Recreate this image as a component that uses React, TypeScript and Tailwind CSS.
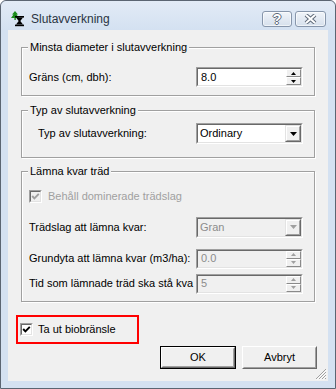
import React from "react";

const Arrow = ({ dir, color, w, h }: { dir: "up" | "down"; color: string; w: number; h: number }) => (
  <svg width={w} height={h} viewBox={`0 0 ${w} ${h}`}>
    {dir === "up" ? (
      <polygon points={`0,${h} ${w / 2},0 ${w},${h}`} fill={color} />
    ) : (
      <polygon points={`0,0 ${w},0 ${w / 2},${h}`} fill={color} />
    )}
  </svg>
);

const Sunken = ({ className, children }: { className: string; children: React.ReactNode }) => (
  <div className={`border border-[#a0a0a0] border-r-white border-b-white ${className}`}>
    <div className="flex h-full border border-[#696969] border-r-[#e3e3e3] border-b-[#e3e3e3]">{children}</div>
  </div>
);

const SpinBox = ({ value, disabled }: { value: string; disabled?: boolean }) => (
  <Sunken className="h-[20px] w-[107px] shrink-0">
    <div
      className={`flex flex-1 items-center pl-[3px] text-[11px] ${
        disabled ? "bg-[#f0f0f0] text-[#8c8c8c]" : "bg-white text-black"
      }`}
    >
      {value}
    </div>
    <div className={`flex w-[15px] flex-col ${disabled ? "bg-[#f0f0f0]" : "bg-white"}`}>
      <div className="flex h-[8px] items-center justify-center border border-white border-r-[#8a8a8a] border-b-[#8a8a8a] bg-[#f0f0f0]">
        <Arrow dir="up" color={disabled ? "#a0a0a0" : "#000"} w={5} h={3} />
      </div>
      <div className="flex h-[8px] items-center justify-center border border-white border-r-[#8a8a8a] border-b-[#8a8a8a] bg-[#f0f0f0]">
        <Arrow dir="down" color={disabled ? "#a0a0a0" : "#000"} w={5} h={3} />
      </div>
    </div>
  </Sunken>
);

const Combo = ({ value, disabled }: { value: string; disabled?: boolean }) => (
  <Sunken className="h-[21px] w-[107px] shrink-0">
    <div
      className={`flex flex-1 items-center pl-[2px] text-[11px] ${
        disabled ? "bg-[#f0f0f0] text-[#8c8c8c]" : "bg-white text-black"
      }`}
    >
      {value}
    </div>
    <div className="border border-[#e3e3e3] border-r-[#696969] border-b-[#696969]">
      <div className="flex h-full w-[14px] items-center justify-center border border-white border-r-[#a0a0a0] border-b-[#a0a0a0] bg-[#f0f0f0]">
        <Arrow dir="down" color={disabled ? "#a0a0a0" : "#000"} w={7} h={4} />
      </div>
    </div>
  </Sunken>
);

const CheckBox = ({ checked, disabled }: { checked: boolean; disabled?: boolean }) => (
  <div className="h-[13px] w-[13px] shrink-0 border border-[#a0a0a0] border-r-white border-b-white">
    <div
      className={`flex h-full items-center justify-center border border-[#696969] border-r-[#e3e3e3] border-b-[#e3e3e3] ${
        disabled ? "bg-[#f0f0f0]" : "bg-white"
      }`}
    >
      {checked && (
        <svg width="9" height="9" viewBox="0 0 9 9">
          <polyline points="1.2,4 3.4,6.4 7.8,1.8" fill="none" stroke={disabled ? "#a0a0a0" : "#000"} strokeWidth="1.9" />
        </svg>
      )}
    </div>
  </div>
);

const Group = ({ title, className, children }: { title: string; className: string; children: React.ReactNode }) => (
  <fieldset
    className={`mx-[13px] border border-[#a0a0a0] shadow-[inset_1px_1px_0_#fff,1px_1px_0_#fff] ${className}`}
  >
    <legend className="ml-[6px] bg-[#f0f0f0] px-[2px] leading-[13px]">{title}</legend>
    {children}
  </fieldset>
);

const WinButton = ({ label, isDefault }: { label: string; isDefault?: boolean }) => (
  <div className={`h-[23px] ${isDefault ? "w-[76px] border border-black" : "w-[75px]"}`}>
    <div className="h-full border border-white border-r-[#696969] border-b-[#696969]">
      <div className="flex h-full items-center justify-center border border-[#f0f0f0] border-r-[#a0a0a0] border-b-[#a0a0a0] bg-[#f0f0f0]">
        {label}
      </div>
    </div>
  </div>
);

const App = () => {
  return (
    <div className="flex h-[389px] w-[336px] flex-col rounded-t-[6px] border border-[#5b6572] bg-[#d4e1f1] font-['Liberation_Sans',Arial,sans-serif] text-[11px] text-black">
      {/* Title bar */}
      <div className="flex h-[29px] items-center rounded-t-[6px] bg-gradient-to-b from-[#e2ebf6] to-[#d4e1f1] pl-[10px] pr-[9px] pt-[7px]">
        <svg width="14" height="16" viewBox="0 0 14 16">
          <polygon points="4,0 1,3.5 2.5,3.5 0,7 8,7 5.5,3.5 7,3.5" fill="#1a8c1a" />
          <rect x="3.4" y="7" width="1.4" height="2" fill="#1a8c1a" />
          <rect x="4" y="5" width="9" height="1.6" fill="#000" />
          <polygon points="5,6.6 12,6.6 9.3,10 12,13.6 5,13.6 7.7,10" fill="#000" />
          <rect x="4" y="13.6" width="9" height="1.6" fill="#000" />
        </svg>
        <span className="ml-[6px] text-[12px] text-[#2a3442]">Slutavverkning</span>
        <div className="ml-auto flex items-center gap-[3px]">
          <div className="flex h-[16px] w-[30px] items-center justify-center rounded-[3px] border border-[#8796ab] bg-gradient-to-b from-[#f0f4f9] to-[#d6e0ec] shadow-[inset_0_0_0_1px_rgba(255,255,255,0.6)]">
            <span className="text-[14px] font-bold leading-none text-white [text-shadow:1px_0_#5f6b7a,-1px_0_#5f6b7a,0_1px_#5f6b7a,0_-1px_#5f6b7a]">
              ?
            </span>
          </div>
          <div className="flex h-[16px] w-[31px] items-center justify-center rounded-[3px] border border-[#8796ab] bg-gradient-to-b from-[#f0f4f9] to-[#d6e0ec] shadow-[inset_0_0_0_1px_rgba(255,255,255,0.6)]">
            <svg width="13" height="10" viewBox="0 0 13 10">
              <path d="M2 1 L11 9 M11 1 L2 9" stroke="#5f6b7a" strokeWidth="4" />
              <path d="M2 1 L11 9 M11 1 L2 9" stroke="#fff" strokeWidth="2" />
            </svg>
          </div>
        </div>
      </div>

      {/* Client area */}
      <div className="relative mx-[7px] flex h-[351px] flex-col bg-[#f0f0f0]">
        <Group title="Minsta diameter i slutavverkning" className="mt-[11px] h-[55px]">
          <div className="flex items-center pl-[7px] pt-[13px]">
            <span className="w-[167px]">Gräns (cm, dbh):</span>
            <SpinBox value="8.0" />
          </div>
        </Group>

        <Group title="Typ av slutavverkning" className="mt-[8px] h-[54px]">
          <div className="flex items-center pl-[16px] pt-[6px]">
            <span className="w-[158px]">Typ av slutavverkning:</span>
            <Combo value="Ordinary" />
          </div>
        </Group>

        <Group title="Lämna kvar träd" className="mt-[7px] h-[137px]">
          <div className="flex flex-col pl-[7px] pt-[10px]">
            <div className="flex items-center gap-[6px]">
              <CheckBox checked disabled />
              <span className="text-[#a0a0a0]">Behåll dominerade trädslag</span>
            </div>
            <div className="mt-[12px] flex items-center">
              <span className="w-[167px]">Trädslag att lämna kvar:</span>
              <Combo value="Gran" disabled />
            </div>
            <div className="mt-[11px] flex items-center">
              <span className="w-[167px] whitespace-nowrap">Grundyta att lämna kvar (m3/ha):</span>
              <SpinBox value="0.0" disabled />
            </div>
            <div className="mt-[5px] flex items-center">
              <span className="w-[167px] whitespace-nowrap">Tid som lämnade träd ska stå kva</span>
              <SpinBox value="5" disabled />
            </div>
          </div>
        </Group>

        <div className="ml-[8px] mt-[13px] flex h-[29px] w-[123px] items-center border-2 border-[#ff0000] pl-[2px]">
          <CheckBox checked />
          <span className="ml-[5px]">Ta ut biobränsle</span>
        </div>

        <div className="mt-[2px] flex justify-end gap-[6px] pr-[11px]">
          <WinButton label="OK" isDefault />
          <WinButton label="Avbryt" />
        </div>

        {/* Size grip */}
        <svg className="absolute bottom-[1px] right-[1px]" width="12" height="12" viewBox="0 0 12 12">
          <path d="M11 1 L1 11 M11 4 L4 11 M11 7 L7 11 M11 10 L10 11" stroke="#a0a0a0" strokeWidth="1" />
          <path d="M12 1.5 L1.5 12 M12 4.5 L4.5 12 M12 7.5 L7.5 12" stroke="#fff" strokeWidth="1" />
        </svg>
      </div>
    </div>
  );
};

export default App;
